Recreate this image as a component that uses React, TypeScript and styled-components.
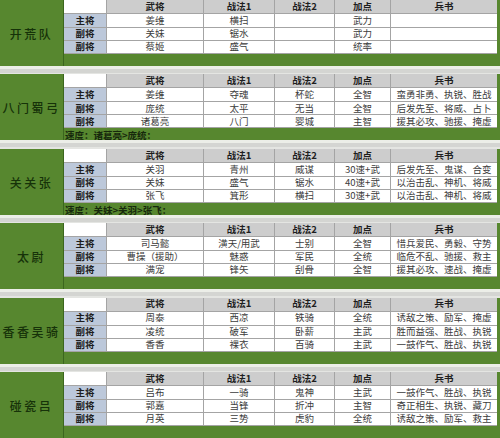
import styled, { createGlobalStyle } from "styled-components";

const GlobalStyle = createGlobalStyle`
  html, body {
    margin: 0;
    padding: 0;
    background: #dcdcda;
  }
  body {
    font-family: "Noto Sans CJK SC", "Noto Sans", sans-serif;
  }
`;

const Page = styled.div`
  width: 500px;
  height: 438px;
  display: flex;
  flex-direction: column;
  overflow: hidden;
  background: #dcdcda;
`;

const Block = styled.section`
  display: flex;
  height: 66px;
  flex-shrink: 0;
  background: #57872f;
`;

const Label = styled.div`
  width: 63px;
  border-right: 1px solid #3b661e;
  display: flex;
  align-items: center;
  justify-content: center;
  font-size: 12px;
  font-weight: 500;
  letter-spacing: 2.5px;
  color: #163209;
  padding-top: 1px;
`;

const Side = styled.div`
  flex: 1;
  display: flex;
  flex-direction: column;
  padding-right: 3px;
`;

const Grid = styled.div`
  display: grid;
  grid-template-columns: 42px 96px 70px 59px 55px 1fr;
  grid-template-rows: 13px 13px 12px 12px;
  gap: 1px;
  background: #a4a4a4;
  border-bottom: 1px solid #a4a4a4;
`;

const Cell = styled.div<{ $kind?: "head" | "role" | "blank" | "data" }>`
  display: flex;
  align-items: center;
  justify-content: center;
  font-size: 9.5px;
  line-height: 1;
  white-space: nowrap;
  color: ${(p) => (p.$kind === "head" || p.$kind === "role" ? "#1e1e1e" : "#3c3c3c")};
  font-weight: ${(p) => (p.$kind === "head" || p.$kind === "role" ? 700 : 400)};
  background: ${(p) =>
    p.$kind === "head"
      ? "#cdcdcd"
      : p.$kind === "role"
      ? "#bcc8da"
      : "#ffffff"};
`;

const Band = styled.div`
  flex: 1;
  display: flex;
  align-items: center;
  padding-left: 1px;
  font-size: 9.5px;
  font-weight: 700;
  color: #16280c;
`;

const Gap = styled.div`
  height: 8.4px;
  flex-shrink: 0;
  background: linear-gradient(#eceee8 0 3px, #d4d5d2 3px 7px, #e4e5e2 7px);
`;

type Row = [string, string, string, string, string, string];

interface Team {
  name: string;
  rows: Row[];
  note?: string;
}

const teams: Team[] = [
  {
    name: "开荒队",
    rows: [
      ["主将", "姜维", "横扫", "", "武力", ""],
      ["副将", "关妹", "锯水", "", "武力", ""],
      ["副将", "蔡姬", "盛气", "", "统率", ""],
    ],
  },
  {
    name: "八门蜀弓",
    rows: [
      ["主将", "姜维", "夺魂", "杯蛇", "全智", "蛮勇非勇、执锐、胜战"],
      ["副将", "庞统", "太平", "无当", "全智", "后发先至、将威、占卜"],
      ["副将", "诸葛亮", "八门", "婴城", "主智", "援其必攻、驰援、掩虚"],
    ],
    note: "速度：诸葛亮>庞统：",
  },
  {
    name: "关关张",
    rows: [
      ["主将", "关羽", "青州", "威谋", "30速+武", "后发先至、鬼谋、合变"],
      ["副将", "关妹", "盛气", "锯水", "40速+武", "以治击乱、神机、将威"],
      ["副将", "张飞", "箕形", "横扫", "30速+武", "以治击乱、神机、将威"],
    ],
    note: "速度：关妹>关羽>张飞：",
  },
  {
    name: "太尉",
    rows: [
      ["主将", "司马懿", "潢天/用武", "士别", "全智", "惜兵爱民、勇毅、守势"],
      ["副将", "曹操（援助）", "魅惑", "军民", "全统", "临危不乱、驰援、救主"],
      ["副将", "满宠", "锋矢", "刮骨", "全智", "援其必攻、速战、掩虚"],
    ],
  },
  {
    name: "香香吴骑",
    rows: [
      ["主将", "周泰", "西凉", "铁骑", "全统", "诱敌之策、励军、掩虚"],
      ["副将", "凌统", "破军", "卧薪", "主武", "胜而益强、胜战、执锐"],
      ["副将", "香香", "裸衣", "百骑", "主武", "一鼓作气、胜战、执锐"],
    ],
  },
  {
    name: "碰瓷吕",
    rows: [
      ["主将", "吕布", "一骑", "鬼神", "主武", "一鼓作气、胜战、执锐"],
      ["副将", "郭嘉", "当锋", "折冲", "主智", "奇正相生、执锐、藏刀"],
      ["副将", "月英", "三势", "虎豹", "全统", "诱敌之策、励军、救主"],
    ],
  },
];

const headers = ["武将", "战法1", "战法2", "加点", "兵书"];

function TeamBlock({ team }: { team: Team }) {
  return (
    <Block>
      <Label>{team.name}</Label>
      <Side>
        <Grid>
          <Cell $kind="blank" />
          {headers.map((h) => (
            <Cell $kind="head" key={h}>
              {h}
            </Cell>
          ))}
          {team.rows.map((row, i) =>
            row.map((v, j) => (
              <Cell key={`${i}-${j}`} $kind={j === 0 ? "role" : "data"}>
                {v}
              </Cell>
            ))
          )}
        </Grid>
        <Band>{team.note}</Band>
      </Side>
    </Block>
  );
}

export default function App() {
  return (
    <>
      <GlobalStyle />
      <Page>
        {teams.map((t, i) => (
          <div key={t.name} style={{ display: "contents" }}>
            {i > 0 && <Gap />}
            <TeamBlock team={t} />
          </div>
        ))}
      </Page>
    </>
  );
}
